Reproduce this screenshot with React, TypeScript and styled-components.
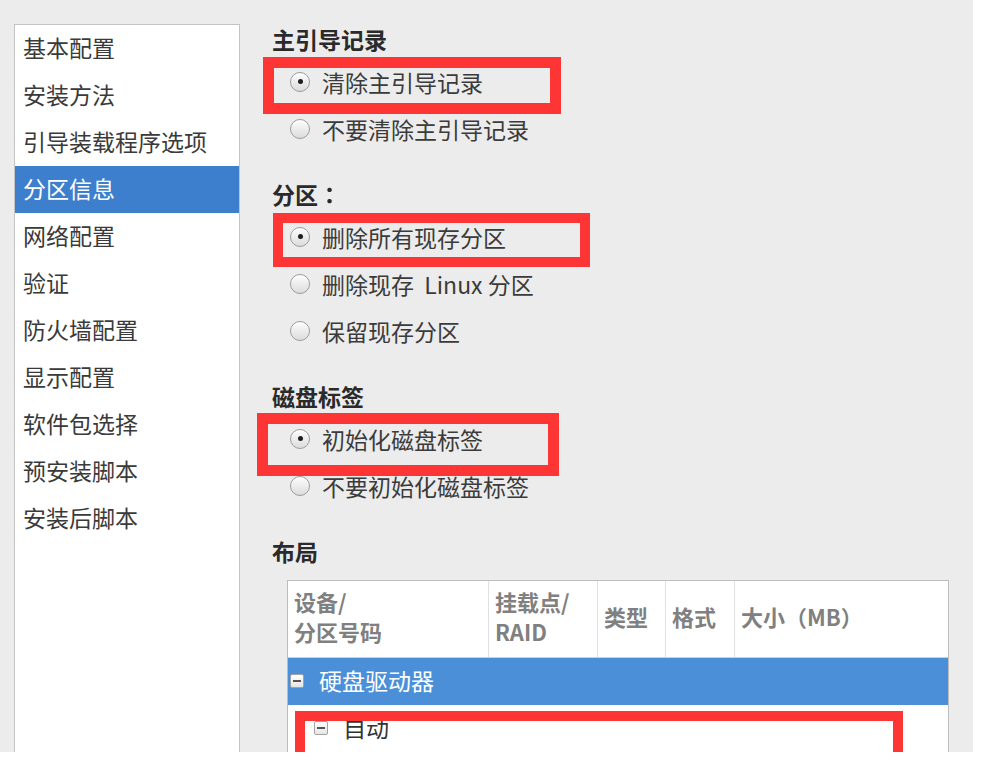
import React from "react"
import styled, { createGlobalStyle } from "styled-components"

const GlobalStyle = createGlobalStyle`
  html, body {
    margin: 0;
    padding: 0;
    background: #fff;
  }
  body {
    font-family: "Noto Sans CJK SC", "Noto Sans", "DejaVu Sans", sans-serif;
  }
`

const Screen = styled.div`
  position: relative;
  display: flex;
  width: 973px;
  height: 752px;
  overflow: hidden;
  background: #ececec;
`

const Sidebar = styled.ul`
  list-style: none;
  flex-shrink: 0;
  box-sizing: border-box;
  width: 226px;
  margin: 24px 0 0 14px;
  padding: 0;
  background: #fff;
  border: 1px solid #c4c4c4;
  border-bottom: none;
`

const SideItem = styled.li<{ $active?: boolean }>`
  height: 47px;
  line-height: 45px;
  padding: 0 0 2px 8px;
  font-size: 23px;
  color: ${(p) => (p.$active ? "#fff" : "#3a3a3a")};
  background: ${(p) => (p.$active ? "#3d7fcd" : "transparent")};
  white-space: nowrap;
  box-sizing: border-box;
`

const Main = styled.div`
  flex: 1;
  display: flex;
  flex-direction: column;
  padding: 20px 24px 0 32px;
  min-width: 0;
`

const Section = styled.div`
  margin-bottom: 23px;
`

const Heading = styled.h3`
  margin: 0;
  font-size: 23px;
  font-weight: 700;
  line-height: 38px;
  color: #2a2a2a;
`

// full-width colon drawn centred in its cell, as in the reference
const Punct = styled.span`
  font-family: "Noto Sans CJK JP", "Noto Sans CJK SC", sans-serif;
`

const RadioRow = styled.label`
  display: flex;
  align-items: center;
  gap: 12px;
  height: 47px;
  padding-left: 18px;
  font-size: 23px;
  color: #3b3b3b;
  white-space: pre;
`

const Radio = styled.span<{ $checked?: boolean }>`
  display: grid;
  place-items: center;
  box-sizing: border-box;
  width: 20px;
  height: 20px;
  border-radius: 50%;
  border: 1px solid #9c9c9c;
  background: linear-gradient(#fdfdfd, #dcdcdc);
  box-shadow: inset 0 1px 1px #fff;

  &::after {
    content: "";
    width: 5px;
    height: 5px;
    border-radius: 50%;
    background: ${(p) => (p.$checked ? "#1e1e1e" : "transparent")};
  }
`

const Table = styled.div`
  flex: 1;
  box-sizing: border-box;
  width: 662px;
  margin: 10px 0 0 15px;
  background: #fff;
  border: 1px solid #bdbdbd;
  border-bottom: none;
`

const HeaderRow = styled.div`
  display: grid;
  grid-template-columns: 201px 109px 68px 69px 1fr;
  height: 76px;
  border-bottom: 1px solid #cfcfcf;
`

const HeaderCell = styled.div`
  display: flex;
  flex-direction: column;
  justify-content: center;
  padding: 0 0 7px 6px;
  border-right: 1px solid #e0e0e0;
  font-size: 22px;
  font-weight: 700;
  line-height: 30px;
  color: #808080;
  white-space: nowrap;

  &:last-child {
    border-right: none;
  }
`

const TreeRow = styled.div<{ $depth: number; $selected?: boolean }>`
  display: flex;
  align-items: center;
  gap: 15px;
  box-sizing: border-box;
  height: 47px;
  padding: 0 0 4px ${(p) => 2 + p.$depth * 24}px;
  font-size: 23px;
  color: ${(p) => (p.$selected ? "#fff" : "#333")};
  background: ${(p) => (p.$selected ? "#4a8fd8" : "#fff")};
`

const Expander = styled.span`
  display: grid;
  place-items: center;
  box-sizing: border-box;
  width: 14px;
  height: 14px;
  margin-top: 3px;
  border: 1px solid #a3a3a3;
  border-radius: 2px;
  background: linear-gradient(#fff, #e6e6e6);

  &::after {
    content: "";
    width: 8px;
    height: 2px;
    background: #555;
  }
`

const Annotation = styled.div<{ $left: number; $top: number; $w: number; $h: number; $b: number }>`
  position: absolute;
  left: ${(p) => p.$left}px;
  top: ${(p) => p.$top}px;
  width: ${(p) => p.$w}px;
  height: ${(p) => p.$h}px;
  box-sizing: border-box;
  border: ${(p) => p.$b}px solid #fd3535;
  pointer-events: none;
`

const menu = [
  "基本配置",
  "安装方法",
  "引导装载程序选项",
  "分区信息",
  "网络配置",
  "验证",
  "防火墙配置",
  "显示配置",
  "软件包选择",
  "预安装脚本",
  "安装后脚本",
]

const sections = [
  { title: "主引导记录", colon: false, options: ["清除主引导记录", "不要清除主引导记录"] },
  { title: "分区", colon: true, options: ["删除所有现存分区", "删除现存  Linux 分区", "保留现存分区"] },
  { title: "磁盘标签", colon: false, options: ["初始化磁盘标签", "不要初始化磁盘标签"] },
]

const marks = [
  { left: 263, top: 57, w: 298, h: 57, b: 11 },
  { left: 273, top: 213, w: 317, h: 54, b: 10 },
  { left: 257, top: 413, w: 302, h: 63, b: 11 },
  { left: 295, top: 711, w: 608, h: 80, b: 10 },
]

export default function App() {
  return (
    <>
      <GlobalStyle />
      <Screen>
        <Sidebar>
          {menu.map((item) => (
            <SideItem key={item} $active={item === "分区信息"}>
              {item}
            </SideItem>
          ))}
        </Sidebar>

        <Main>
          {sections.map((s) => (
            <Section key={s.title}>
              <Heading>
                {s.title}
                {s.colon && <Punct>：</Punct>}
              </Heading>
              {s.options.map((o, i) => (
                <RadioRow key={o}>
                  <Radio $checked={i === 0} />
                  {o}
                </RadioRow>
              ))}
            </Section>
          ))}

          <Heading>布局</Heading>
          <Table>
            <HeaderRow>
              <HeaderCell>
                <span>设备/</span>
                <span>分区号码</span>
              </HeaderCell>
              <HeaderCell>
                <span>挂载点/</span>
                <span>RAID</span>
              </HeaderCell>
              <HeaderCell>类型</HeaderCell>
              <HeaderCell>格式</HeaderCell>
              <HeaderCell>大小（MB）</HeaderCell>
            </HeaderRow>
            <TreeRow $depth={0} $selected>
              <Expander />
              硬盘驱动器
            </TreeRow>
            <TreeRow $depth={1}>
              <Expander />
              自动
            </TreeRow>
          </Table>
        </Main>

        {marks.map((m, i) => (
          <Annotation key={i} $left={m.left} $top={m.top} $w={m.w} $h={m.h} $b={m.b} />
        ))}
      </Screen>
    </>
  )
}
